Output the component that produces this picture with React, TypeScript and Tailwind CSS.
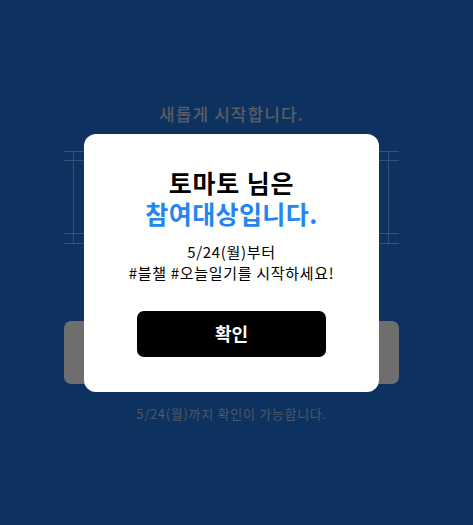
import React from 'react';

export default function App() {
  return (
    <div
      className="min-h-[525px] w-full bg-[#0d3260] relative"
      style={{ fontFamily: '"Noto Sans CJK KR", "Noto Sans", sans-serif' }}
    >
      {/* Dimmed page underneath */}
      <div className="w-[463px] flex flex-col items-center pt-[102px]">
        <h1 className="text-[17px] leading-[24px] font-medium tracking-[1.1px] text-[#5a5d62]">새롭게 시작합니다.</h1>

        {/* Framed area */}
        <div className="mt-[25px] w-[335px] h-[93px] flex flex-col justify-between">
          <div className="flex flex-col gap-[8px]">
            <div className="h-px bg-[#34507a]" />
            <div className="h-px bg-[#34507a]" />
          </div>
          <div className="flex flex-col gap-[9px]">
            <div className="h-px bg-[#34507a]" />
            <div className="h-px bg-[#34507a]" />
          </div>
        </div>

        <div className="mt-[77px] w-[335px] h-[63px] rounded-[7px] bg-[#6e6e6e]" />

        <p className="mt-[21px] text-[13px] leading-[18px] tracking-[0.7px] text-[#4f5866]">5/24(월)까지 확인이 가능합니다.</p>
      </div>

      {/* Vertical frame lines */}
      <div className="absolute left-[73px] top-[151px] w-px h-[92px] bg-[#34507a]" />
      <div className="absolute left-[388px] top-[151px] w-px h-[92px] bg-[#34507a]" />

      {/* Modal */}
      <div className="fixed inset-0 flex items-center justify-center pr-[10px]">
        <div className="w-[295px] h-[258px] bg-white rounded-[12px] flex flex-col items-center pt-[33px]">
          <div className="text-[25px] leading-[31px] font-bold tracking-[0.8px] text-black">토마토 님은</div>
          <div className="text-[25px] leading-[31px] font-bold tracking-[0.4px] text-[#2386ef]">참여대상입니다.</div>
          <div className="mt-[12px] text-[15px] leading-[21px] tracking-[0.7px] text-black text-center">
            <div>5/24(월)부터</div>
            <div>#블챌 #오늘일기를 시작하세요!</div>
          </div>
          <button className="mt-[28px] w-[189px] h-[46px] rounded-[7px] bg-black text-white text-[18px] font-bold">
            확인
          </button>
        </div>
      </div>
    </div>
  );
}
